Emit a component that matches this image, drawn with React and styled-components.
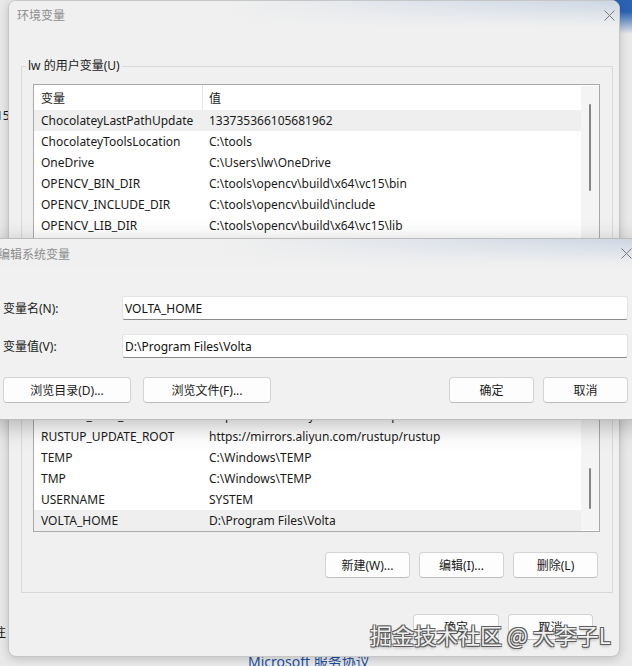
import styled, { createGlobalStyle } from 'styled-components';

const GlobalStyle = createGlobalStyle`
  html, body {
    margin: 0;
    padding: 0;
  }
  body {
    background: #e9e9e9;
    font-family: "Noto Sans", "Noto Sans CJK SC", sans-serif;
    font-size: 12px;
    color: #1a1a1a;
  }
`;

const Desktop = styled.div`
  position: relative;
  width: 632px;
  height: 666px;
  overflow: hidden;
  background:
    radial-gradient(70px 34px at 632px 0, #2c62b2 35%, rgba(44, 98, 178, 0) 100%),
    #e9e9e9;
`;

const BackText = styled.span`
  position: absolute;
  left: ${p => p.x}px;
  top: ${p => p.y}px;
  font-size: ${p => p.size || 12}px;
  color: ${p => p.color || '#1a1a1a'};
  white-space: nowrap;
`;

/* ---------- main window ---------- */

const Window = styled.div`
  position: absolute;
  left: 8px;
  top: 0;
  width: 612px;
  height: 657px;
  box-sizing: border-box;
  background: #f0f0f0;
  border: 1px solid #c6c6c6;
  border-radius: 8px;
  box-shadow: 0 2px 10px rgba(0, 0, 0, 0.18);
  display: flex;
  flex-direction: column;
  overflow: hidden;
`;

const TitleBar = styled.div`
  height: ${p => p.h}px;
  flex: none;
  display: flex;
  align-items: center;
  justify-content: space-between;
  padding: 0 ${p => p.right}px 0 ${p => p.left}px;
  background:
    linear-gradient(180deg, rgba(240, 240, 240, 0) 0, #f0f0f0 26px),
    linear-gradient(90deg, #f0f0f0 35%, #ccd6e4);
`;

const TitleText = styled.span`
  color: #8d8d8d;
  font-size: 12px;
`;

const CloseIcon = () => (
  <svg width="11" height="11" viewBox="0 0 11 11">
    <path d="M0.5 0.5 L10.5 10.5 M10.5 0.5 L0.5 10.5" stroke="#7a7a7a" strokeWidth="1" fill="none" />
  </svg>
);

const WindowBody = styled.div`
  flex: 1;
  padding: 29px 6px 0 12px;
  display: flex;
  flex-direction: column;
`;

const Group = styled.fieldset`
  margin: 0;
  min-width: 0;
  border: 1px solid #d9d9d9;
  padding: 10px 12px 14px 11px;
  display: flex;
  flex-direction: column;
`;

const GroupLabel = styled.legend`
  margin-left: -7px;
  padding: 0 2px;
  line-height: 16px;
  font-size: 12px;
  color: #1a1a1a;
`;

const ListView = styled.div`
  border: 1px solid #a9a9a9;
  background: #fff;
  display: grid;
  grid-template-columns: 1fr 18px;
`;

const Table = styled.div`
  display: flex;
  flex-direction: column;
`;

const Row = styled.div`
  display: grid;
  grid-template-columns: 169px 1fr;
  height: ${p => (p.header ? 25 : p.h || 21)}px;
  align-items: center;
  background: ${p => (p.shaded ? '#efefef' : '#fff')};
  white-space: nowrap;
`;

const NameCell = styled.div`
  padding-left: 7px;
  height: 100%;
  display: flex;
  align-items: center;
  border-right: 1px solid ${p => (p.header ? '#e6e6e6' : 'transparent')};
  overflow: hidden;
`;

const ValueCell = styled.div`
  padding-left: 6px;
  overflow: hidden;
`;

const ScrollTrack = styled.div`
  position: relative;
  margin: 1px 0 1px 0;
  background: #f4f4f4;
`;

const Thumb = styled.div`
  position: absolute;
  left: 8px;
  width: 2px;
  border-radius: 1px;
  background: #858585;
  top: ${p => p.top}px;
  height: ${p => p.h}px;
`;

const ButtonRow = styled.div`
  display: flex;
  justify-content: ${p => p.justify || 'flex-end'};
  gap: ${p => p.gap || 9}px;
  margin-top: ${p => p.mt || 0}px;
  padding-right: ${p => p.pr || 0}px;
`;

const Spacer = styled.div`
  flex: 1;
`;

const Button = styled.button`
  width: ${p => p.w || 85}px;
  height: 26px;
  box-sizing: border-box;
  border: 1px solid #d3d3d3;
  border-bottom-color: #bdbdbd;
  border-radius: 4px;
  background: #fdfdfd;
  font-family: inherit;
  font-size: 12px;
  color: #1a1a1a;
  padding: 0;
`;

/* ---------- edit dialog ---------- */

const EditWindow = styled.div`
  position: absolute;
  left: -9px;
  top: 238px;
  width: 650px;
  height: 182px;
  box-sizing: border-box;
  background: #f1f1f1;
  border: 1px solid #bdbdbd;
  box-shadow: 0 6px 22px rgba(0, 0, 0, 0.26);
  display: flex;
  flex-direction: column;
`;

const EditBody = styled.div`
  padding: 28px 12px 0 11px;
  display: flex;
  flex-direction: column;
`;

const Form = styled.div`
  display: grid;
  grid-template-columns: 119px 1fr;
  row-gap: 14px;
  align-items: center;
`;

const FieldLabel = styled.label`
  font-size: 12px;
  color: #1a1a1a;
`;

const TextInput = styled.div`
  height: 24px;
  box-sizing: border-box;
  border: 1px solid #e4e4e4;
  border-bottom: 1px solid #8b8b8b;
  border-radius: 3px;
  background: #fff;
  padding-left: 2px;
  display: flex;
  align-items: center;
  color: #111;
`;

const Watermark = styled.div`
  position: absolute;
  left: 370px;
  top: 619px;
  font-family: "Noto Sans CJK SC", sans-serif;
  font-size: 22px;
  line-height: 30px;
  color: rgba(255, 255, 255, 0.92);
  white-space: nowrap;
  text-shadow:
    1px 1px 0 #5c5c5c, -1px -1px 0 #5c5c5c, 1px -1px 0 #5c5c5c, -1px 1px 0 #5c5c5c,
    0 2px 3px rgba(0, 0, 0, 0.3);
`;

const rows = [
  ['ChocolateyLastPathUpdate', '133735366105681962'],
  ['ChocolateyToolsLocation', 'C:\\tools'],
  ['OneDrive', 'C:\\Users\\lw\\OneDrive'],
  ['OPENCV_BIN_DIR', 'C:\\tools\\opencv\\build\\x64\\vc15\\bin'],
  ['OPENCV_INCLUDE_DIR', 'C:\\tools\\opencv\\build\\include'],
  ['OPENCV_LIB_DIR', 'C:\\tools\\opencv\\build\\x64\\vc15\\lib'],
  ['OneDriveConsumer', 'C:\\Users\\lw\\OneDrive'],
  ['OS', 'Windows_NT'],
  ['Path', 'C:\\Windows\\system32;C:\\Windows;C:\\Windows\\System32\\Wbem'],
  ['PATHEXT', '.COM;.EXE;.BAT;.CMD;.VBS;.VBE;.JS;.JSE;.WSF;.WSH;.MSC'],
  ['PROCESSOR_ARCHITECTURE', 'AMD64'],
  ['PROCESSOR_LEVEL', '6'],
  ['PROCESSOR_REVISION', '9a03'],
  ['PSModulePath', '%ProgramFiles%\\WindowsPowerShell\\Modules'],
  ['RUSTUP_DIST_SERVER', 'https://mirrors.aliyun.com/rustup'],
  ['RUSTUP_UPDATE_ROOT', 'https://mirrors.aliyun.com/rustup/rustup'],
  ['TEMP', 'C:\\Windows\\TEMP'],
  ['TMP', 'C:\\Windows\\TEMP'],
  ['USERNAME', 'SYSTEM'],
  ['VOLTA_HOME', 'D:\\Program Files\\Volta'],
];

const shadedRows = [0, 19];

export default function App() {
  return (
    <Desktop>
      <GlobalStyle />
      <BackText x={-4} y={107}>15</BackText>
      <BackText x={-6} y={623}>注</BackText>
      <BackText x={248} y={651} size={14} color="#1c4f9f">Microsoft 服务协议</BackText>

      <Window>
        <TitleBar h={28} left={8} right={4}>
          <TitleText>环境变量</TitleText>
          <CloseIcon />
        </TitleBar>
        <WindowBody>
          <Group>
            <GroupLabel>lw 的用户变量(U)</GroupLabel>
            <ListView>
              <Table>
                <Row header>
                  <NameCell header>变量</NameCell>
                  <ValueCell>值</ValueCell>
                </Row>
                {rows.map(([name, value], i) => (
                  <Row key={name} shaded={shadedRows.includes(i)} h={i === 10 ? 22 : 21}>
                    <NameCell>{name}</NameCell>
                    <ValueCell>{value}</ValueCell>
                  </Row>
                ))}
              </Table>
              <ScrollTrack>
                <Thumb top={18} h={87} />
                <Thumb top={382} h={41} />
              </ScrollTrack>
            </ListView>
            <ButtonRow mt={20} pr={2}>
              <Button>新建(W)...</Button>
              <Button>编辑(I)...</Button>
              <Button>删除(L)</Button>
            </ButtonRow>
          </Group>
          <ButtonRow mt={21} pr={20}>
            <Button w={86}>确定</Button>
            <Button>取消</Button>
          </ButtonRow>
        </WindowBody>
      </Window>

      <EditWindow>
        <TitleBar h={29} left={6} right={8}>
          <TitleText>编辑系统变量</TitleText>
          <CloseIcon />
        </TitleBar>
        <EditBody>
          <Form>
            <FieldLabel>变量名(N):</FieldLabel>
            <TextInput>VOLTA_HOME</TextInput>
            <FieldLabel>变量值(V):</FieldLabel>
            <TextInput>D:\Program Files\Volta</TextInput>
          </Form>
          <ButtonRow mt={19} gap={12} justify="flex-start">
            <Button w={128}>浏览目录(D)...</Button>
            <Button w={128}>浏览文件(F)...</Button>
            <Spacer />
            <ButtonRow gap={9}>
              <Button>确定</Button>
              <Button>取消</Button>
            </ButtonRow>
          </ButtonRow>
        </EditBody>
      </EditWindow>

      <Watermark>掘金技术社区 @ 大李子L</Watermark>
    </Desktop>
  );
}
